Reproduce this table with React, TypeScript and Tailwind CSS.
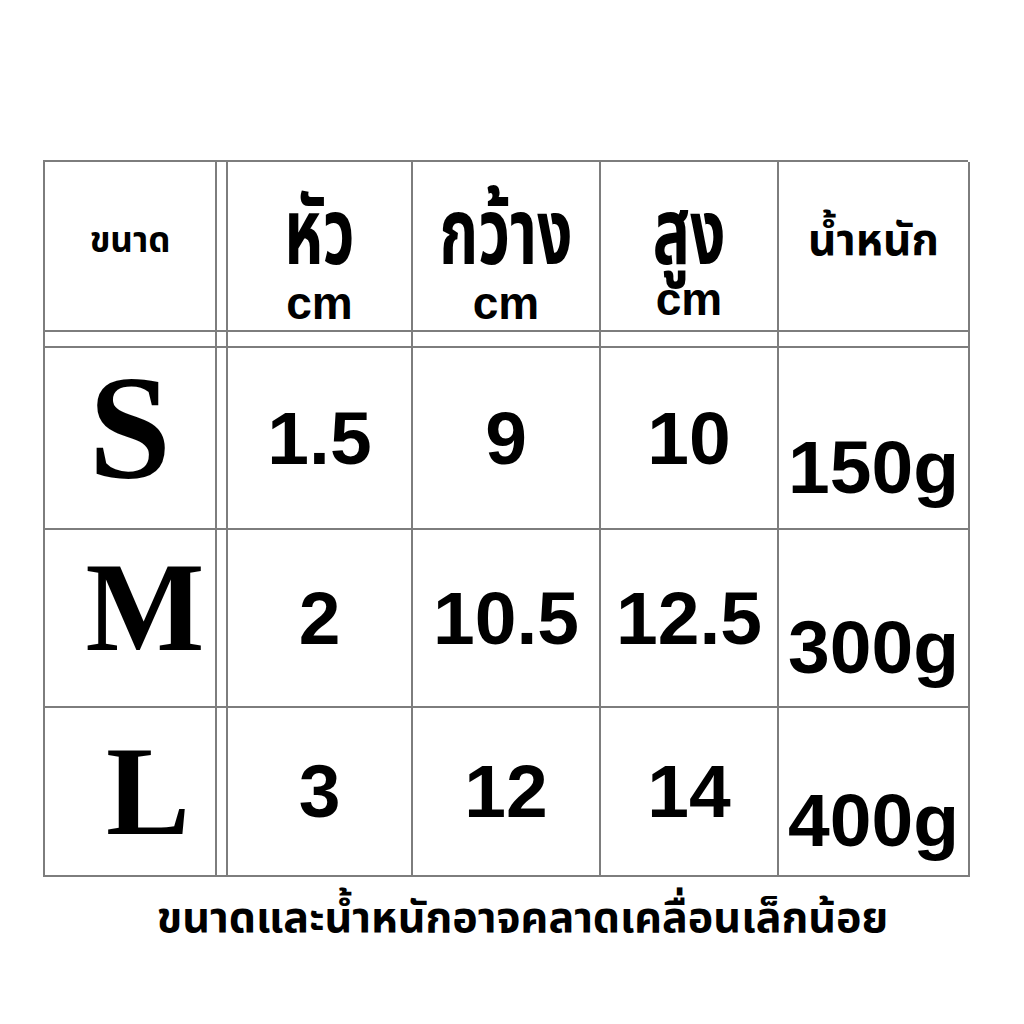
const thai = 'font-["Noto_Sans_Thai","Noto_Sans","DejaVu_Sans",sans-serif] font-bold text-black';
const num = 'font-["Liberation_Sans",Arial,sans-serif] font-bold text-black text-[75px] leading-none';
const cm = 'font-["Liberation_Sans",Arial,sans-serif] font-bold text-black text-[46px] leading-none';
const size = 'font-["Liberation_Serif","Times_New_Roman",serif] font-bold text-black leading-none';

const cell = 'border-r-2 border-b-2 border-[#7d7d7d] flex items-center justify-center';

type Row = { size: string; sizeCls: string; pad: string; head: string; width: string; height: string; weight: string };

const rows: Row[] = [
  { size: 'S', sizeCls: 'text-[148px]', pad: 'pb-5', head: '1.5', width: '9', height: '10', weight: '150g' },
  { size: 'M', sizeCls: 'text-[126px]', pad: 'pb-5 pl-[30px]', head: '2', width: '10.5', height: '12.5', weight: '300g' },
  { size: 'L', sizeCls: 'text-[126px]', pad: 'pl-[36px]', head: '3', width: '12', height: '14', weight: '400g' },
];

function HeadCell({ label, cmClass }: { label: string; cmClass?: string }) {
  return (
    <div className="border-r-2 border-b-2 border-[#7d7d7d] flex flex-col items-center justify-start pt-[54px]">
      <div className={`${thai} text-[62px] leading-[40px] scale-y-[1.48]`}>{label}</div>
      <div className={`${cm} ${cmClass ?? 'mt-[24px]'}`}>cm</div>
    </div>
  );
}

export default function App() {
  return (
    <div className="w-[1024px] h-[1024px] bg-white pt-[160px] pl-[43px]">
      <div className="grid grid-cols-[172px_11px_185px_188px_178px_191px] grid-rows-[170px_16px_182px_178px_169px] w-[925px] border-l-2 border-t-2 border-[#7d7d7d]">
        {/* header */}
        <div className={cell}>
          <span className={`${thai} text-[35px] -mt-2`}>ขนาด</span>
        </div>
        <div className={cell} />
        <HeadCell label="หัว" />
        <HeadCell label="กว้าง" />
        <HeadCell label="สูง" cmClass="mt-[20px]" />
        <div className={cell}>
          <span className={`${thai} text-[44px] -mt-2`}>น้ำหนัก</span>
        </div>

        {/* double line spacer row */}
        <div className={cell} />
        <div className={cell} />
        <div className={cell} />
        <div className={cell} />
        <div className={cell} />
        <div className={cell} />

        {rows.map((r) => (
          <>
            <div key={r.size + 'a'} className={`${cell} ${r.pad}`}>
              <span className={`${size} ${r.sizeCls}`}>{r.size}</span>
            </div>
            <div key={r.size + 'b'} className={cell} />
            <div key={r.size + 'c'} className={cell}>
              <span className={num}>{r.head}</span>
            </div>
            <div key={r.size + 'd'} className={cell}>
              <span className={num}>{r.width}</span>
            </div>
            <div key={r.size + 'e'} className={cell}>
              <span className={num}>{r.height}</span>
            </div>
            <div key={r.size + 'f'} className={`${cell} pt-[58px]`}>
              <span className={num}>{r.weight}</span>
            </div>
          </>
        ))}
      </div>
      <div className="w-[925px] pl-[34px] pt-5 text-center">
        <span className={`${thai} text-[43px] leading-none`}>ขนาดและน้ำหนักอาจคลาดเคลื่อนเล็กน้อย</span>
      </div>
    </div>
  );
}
